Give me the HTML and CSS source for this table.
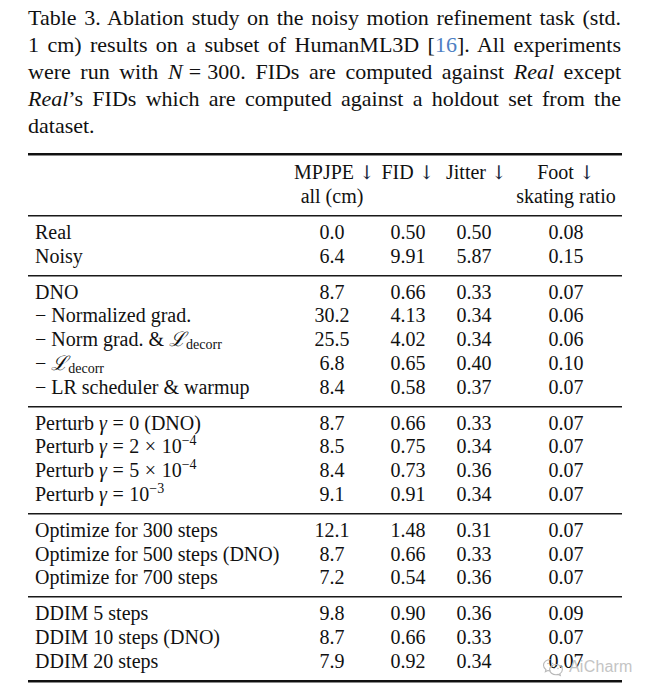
FILE: index.html
```html
<!DOCTYPE html>
<html>
<head>
<meta charset="utf-8">
<link rel="stylesheet" href="styles.css">
</head>
<body>
<div class="page">
  <p class="caption">Table 3. Ablation study on the noisy motion refinement task (std.<br>1 cm) results on a subset of HumanML3D [<span class="ref">16</span>]. All experiments<br>were run with <i>N</i><span class="eq">=</span>300. FIDs are computed against <i>Real</i> except<br><i>Real</i>’s FIDs which are computed against a holdout set from the<br>dataset.</p>

  <div class="table">
    <div class="rule thick"></div>
    <div class="row head">
      <div class="c c1"></div>
      <div class="c">MPJPE <span class="arr">↓</span><br>all (cm)</div>
      <div class="c">FID <span class="arr">↓</span></div>
      <div class="c">Jitter <span class="arr">↓</span></div>
      <div class="c c5">Foot <span class="arr">↓</span><br>skating ratio</div>
    </div>
    <div class="rule"></div>

    <div class="group">
      <div class="row"><div class="c c1">Real</div><div class="c">0.0</div><div class="c">0.50</div><div class="c">0.50</div><div class="c c5">0.08</div></div>
      <div class="row"><div class="c c1">Noisy</div><div class="c">6.4</div><div class="c">9.91</div><div class="c">5.87</div><div class="c c5">0.15</div></div>
    </div>
    <div class="rule"></div>

    <div class="group">
      <div class="row"><div class="c c1">DNO</div><div class="c">8.7</div><div class="c">0.66</div><div class="c">0.33</div><div class="c c5">0.07</div></div>
      <div class="row"><div class="c c1">− Normalized grad.</div><div class="c">30.2</div><div class="c">4.13</div><div class="c">0.34</div><div class="c c5">0.06</div></div>
      <div class="row"><div class="c c1">− Norm grad. &amp; <span class="cal">ℒ</span><sub>decorr</sub></div><div class="c">25.5</div><div class="c">4.02</div><div class="c">0.34</div><div class="c c5">0.06</div></div>
      <div class="row"><div class="c c1">− <span class="cal">ℒ</span><sub>decorr</sub></div><div class="c">6.8</div><div class="c">0.65</div><div class="c">0.40</div><div class="c c5">0.10</div></div>
      <div class="row"><div class="c c1">− LR scheduler &amp; warmup</div><div class="c">8.4</div><div class="c">0.58</div><div class="c">0.37</div><div class="c c5">0.07</div></div>
    </div>
    <div class="rule"></div>

    <div class="group">
      <div class="row"><div class="c c1">Perturb <i>γ</i><span class="eq">=</span>0 (DNO)</div><div class="c">8.7</div><div class="c">0.66</div><div class="c">0.33</div><div class="c c5">0.07</div></div>
      <div class="row"><div class="c c1">Perturb <i>γ</i><span class="eq">=</span>2<span class="eq">×</span>10<sup>−4</sup></div><div class="c">8.5</div><div class="c">0.75</div><div class="c">0.34</div><div class="c c5">0.07</div></div>
      <div class="row"><div class="c c1">Perturb <i>γ</i><span class="eq">=</span>5<span class="eq">×</span>10<sup>−4</sup></div><div class="c">8.4</div><div class="c">0.73</div><div class="c">0.36</div><div class="c c5">0.07</div></div>
      <div class="row"><div class="c c1">Perturb <i>γ</i><span class="eq">=</span>10<sup>−3</sup></div><div class="c">9.1</div><div class="c">0.91</div><div class="c">0.34</div><div class="c c5">0.07</div></div>
    </div>
    <div class="rule"></div>

    <div class="group">
      <div class="row"><div class="c c1">Optimize for 300 steps</div><div class="c">12.1</div><div class="c">1.48</div><div class="c">0.31</div><div class="c c5">0.07</div></div>
      <div class="row"><div class="c c1">Optimize for 500 steps (DNO)</div><div class="c">8.7</div><div class="c">0.66</div><div class="c">0.33</div><div class="c c5">0.07</div></div>
      <div class="row"><div class="c c1">Optimize for 700 steps</div><div class="c">7.2</div><div class="c">0.54</div><div class="c">0.36</div><div class="c c5">0.07</div></div>
    </div>
    <div class="rule"></div>

    <div class="group">
      <div class="row"><div class="c c1">DDIM 5 steps</div><div class="c">9.8</div><div class="c">0.90</div><div class="c">0.36</div><div class="c c5">0.09</div></div>
      <div class="row"><div class="c c1">DDIM 10 steps (DNO)</div><div class="c">8.7</div><div class="c">0.66</div><div class="c">0.33</div><div class="c c5">0.07</div></div>
      <div class="row"><div class="c c1">DDIM 20 steps</div><div class="c">7.9</div><div class="c">0.92</div><div class="c">0.34</div><div class="c c5">0.07</div></div>
    </div>
    <div class="rule thick"></div>
  </div>

  <div class="watermark">
    <svg class="wm-icon" width="22" height="20" viewBox="0 0 22 20">
      <path d="M8.5 2.5c-4 0-7 2.6-7 5.8 0 1.8 1 3.4 2.5 4.4l-.6 2 2.4-1.2c.8.2 1.7.4 2.7.4" fill="none" stroke="#b8b8b8" stroke-width="1.1"/>
      <path d="M14 7.5c-3.6 0-6.4 2.3-6.4 5.1s2.8 5.1 6.4 5.1c.8 0 1.5-.1 2.2-.3l2.1 1.1-.5-1.8c1.6-.9 2.6-2.4 2.6-4.1 0-2.8-2.8-5.1-6.4-5.1z" fill="none" stroke="#b8b8b8" stroke-width="1.1"/>
      <circle cx="6" cy="6.5" r=".8" fill="#b8b8b8"/>
      <circle cx="10.5" cy="6.5" r=".8" fill="#b8b8b8"/>
      <circle cx="12" cy="11.5" r=".7" fill="#b8b8b8"/>
      <circle cx="16" cy="11.5" r=".7" fill="#b8b8b8"/>
    </svg>
    <span class="wm-text">AiCharm</span>
  </div>
</div>
</body>
</html>
```

FILE: styles.css
```css
html, body {
  margin: 0;
  padding: 0;
  background: #ffffff;
}

.page {
  position: relative;
  width: 656px;
  height: 696px;
  padding: 4px 0 0 28px;
  box-sizing: border-box;
  font-family: "Liberation Serif", "DejaVu Serif", serif;
  color: #111111;
}

.caption {
  margin: 0;
  width: 593px;
  font-size: 22px;
  line-height: 27px;
  text-align: justify;
  text-align-last: justify;
}

.caption .ref {
  color: #4d7fc4;
}

.eq {
  padding: 0 0.28em;
}

.table {
  margin-top: 14px;
  width: 594px;
  font-size: 20px;
}

.rule {
  height: 1px;
  background: #1a1a1a;
  box-shadow: 0 1px 0 #8a8a8a;
  margin-bottom: 1px;
}

.rule.thick {
  height: 2px;
  background: #111111;
}

.row {
  display: grid;
  grid-template-columns: 266px 76px 76px 56px 120px;
  line-height: 23.8px;
  white-space: nowrap;
}

.head {
  line-height: 24px;
  padding: 4px 0 7px;
}

.group {
  padding: 4px 0 6px;
}

.c {
  text-align: center;
}

.c1 {
  text-align: left;
  padding-left: 7px;
}

.c5 {
  padding-left: 8px;
}

.arr {
  font-family: "DejaVu Serif", serif;
  font-size: 19px;
  color: #1d2a40;
}

.cal {
  font-family: "DejaVu Serif", serif;
  font-style: italic;
}

sub {
  font-size: 14px;
  line-height: 0;
  vertical-align: -0.2em;
}

sup {
  font-size: 14px;
  line-height: 0;
  vertical-align: 0.55em;
}

.watermark {
  position: absolute;
  left: 542px;
  top: 657px;
  display: flex;
  align-items: center;
  gap: 5px;
}

.wm-text {
  font-family: "Liberation Sans", Arial, sans-serif;
  font-size: 16px;
  color: #c4c4c4;
  letter-spacing: 0.2px;
}
```
